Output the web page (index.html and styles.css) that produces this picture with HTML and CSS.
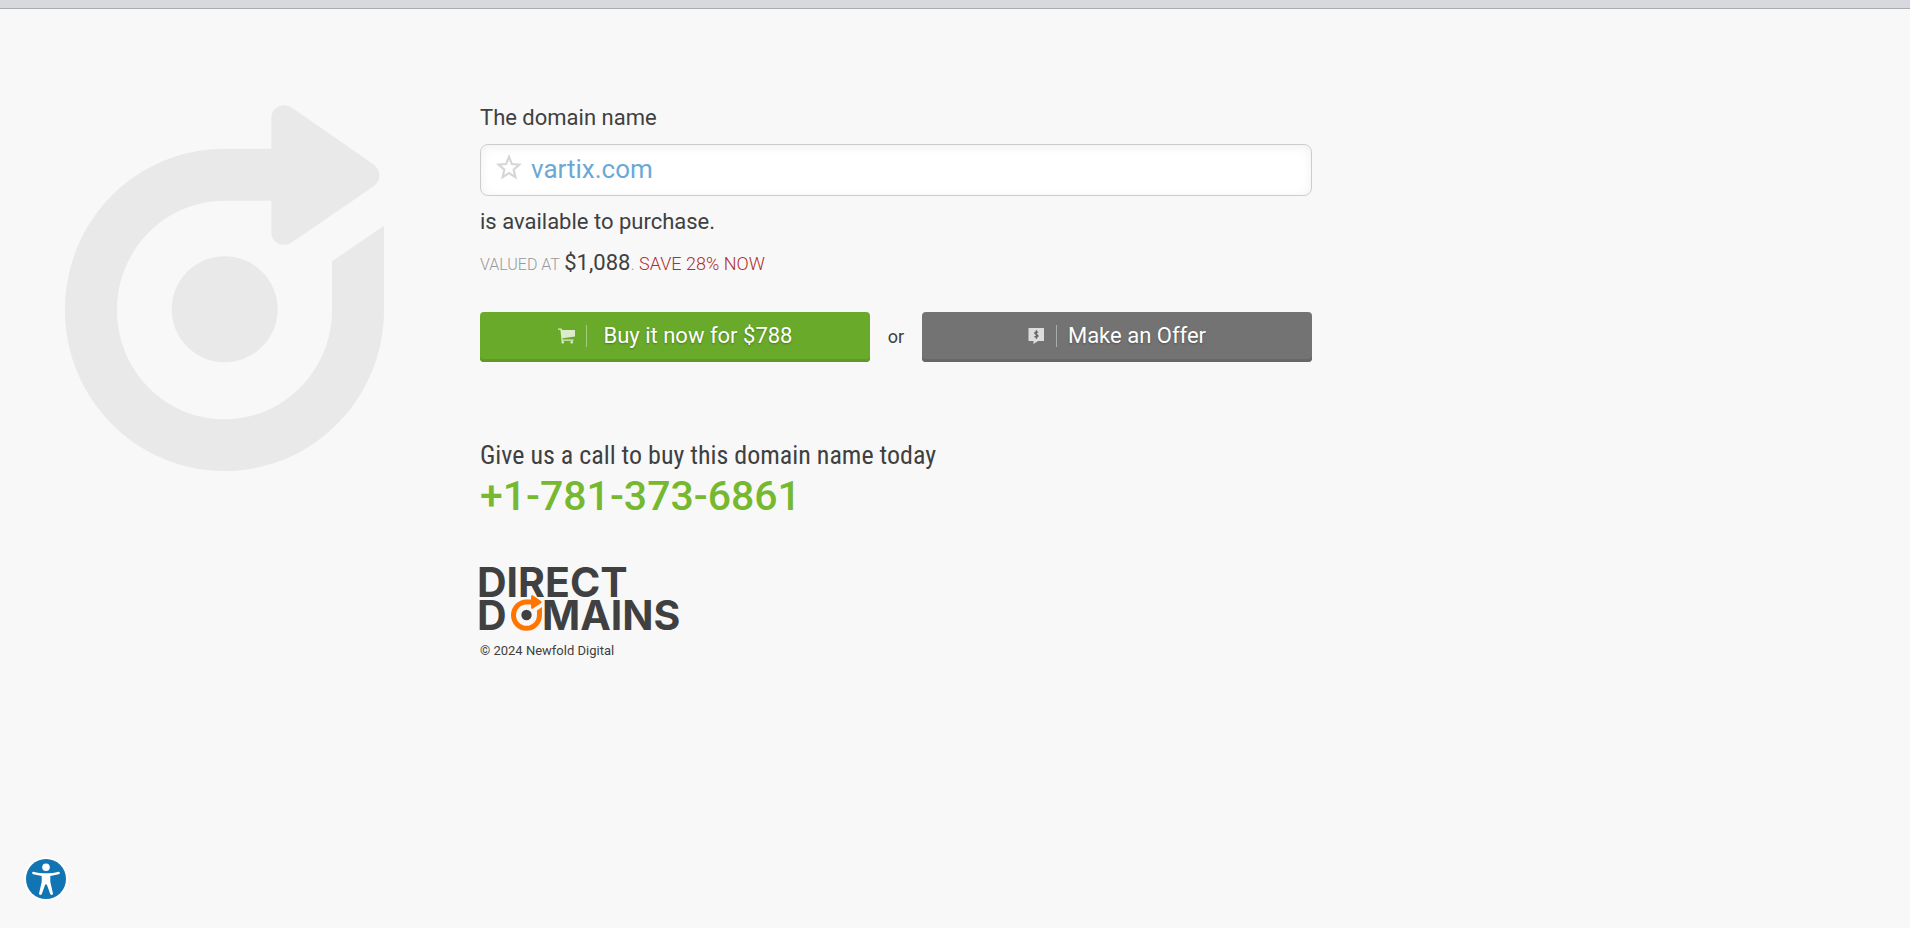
FILE: index.html
```html
<!DOCTYPE html>
<html lang="en">
<head>
<meta charset="utf-8">
<meta name="viewport" content="width=device-width, initial-scale=1">
<title>vartix.com is available to purchase</title>
<link rel="stylesheet" href="styles.css">
</head>
<body>
<svg class="defs" aria-hidden="true">
  <symbol id="ring" viewBox="75 44 957 1098">
    <path d="M694 175H554C289 175 75 390 75 659C75 926 289 1142 554 1142C818 1142 1032 926 1032 659V406L876 513V659C876 840 732 987 554 987C375 987 231 840 231 659C231 478 375 331 554 331H694V428C694 458 729 474 756 456L999 289C1025 272 1025 240 999 221L756 52C729 34 694 50 694 84Z"/>
  </symbol>
</svg>
<div class="topbar"></div>
<main class="page">
  <svg class="emblem" viewBox="75 44 957 1098" aria-hidden="true">
    <use href="#ring" x="75" y="44" width="957" height="1098"/>
    <circle cx="554" cy="657" r="159"/>
  </svg>
  <div class="content">
    <label class="lead" for="domain">The domain name</label>
    <div class="domain-box">
      <svg class="star" viewBox="0 0 24 24" aria-hidden="true"><path d="M12 2.600L14.600 9.200L21.600 9.800L16.300 14.400L17.900 21.300L12 17.600L6.100 21.300L7.700 14.400L2.400 9.800L9.400 9.200Z"/></svg>
      <input class="domain-input" id="domain" type="text" value="vartix.com" readonly>
    </div>
    <p class="lead">is available to purchase.</p>
    <p class="value"><span class="value-label">VALUED AT</span> <span class="price">$1,088</span>. <span class="save">SAVE 28% NOW</span></p>
    <div class="actions">
      <button class="btn btn-buy" type="button">
        <svg class="btn-icon" viewBox="0 0 17 16" aria-hidden="true"><path d="M0 .5H3.500L4.200 2H17V8.500L4.500 10.300V11.500H15.500V12.700H3.300V9.800L2.400 1.700H0Z"/><rect x="3.500" y="13" width="2.500" height="2.500" rx=".8"/><rect x="12.500" y="13" width="2.500" height="2.500" rx=".8"/></svg>
        <span class="btn-label">Buy it now for $788</span>
      </button>
      <span class="or">or</span>
      <button class="btn btn-offer" type="button">
        <svg class="btn-icon" viewBox="0 0 17 16" aria-hidden="true"><path d="M1 0H15.500Q16 0 16 .6V12.500Q16 13 15.500 13H10L5.500 16V13H1Q.5 13 .5 12.500V.6Q.5 0 1 0Z"/><path class="dollar" d="M10 4.700C9.700 3.500 6.900 3.400 6.800 5C6.800 6.800 10 6.100 10 8C9.900 9.600 7 9.500 6.600 8.300M8.400 2.200V10.800"/></svg>
        <span class="btn-label">Make an Offer</span>
      </button>
    </div>
    <section class="call">
      <p class="call-text">Give us a call to buy this domain name today</p>
      <a class="phone" href="tel:+17813736861">+1-781-373-6861</a>
    </section>
    <footer>
      <svg class="logo" viewBox="0 0 200 66" role="img" aria-label="Direct Domains">
        <text x="-3" y="31">DIRECT</text>
        <text x="-3" y="64">D</text>
        <use class="logo-ring" href="#ring" x="31" y="29" width="31" height="36"/>
        <circle cx="46.500" cy="49" r="5.200"/>
        <text x="62" y="64">MAINS</text>
      </svg>
      <p class="copyright">© 2024 Newfold Digital</p>
    </footer>
  </div>
</main>
<button class="access" type="button" aria-label="Accessibility">
  <svg viewBox="0 0 40 40" aria-hidden="true"><circle class="disc" cx="20" cy="20" r="20"/><circle cx="20" cy="8.300" r="3.800"/><path d="M7.500 12.700C15 14.800 25 14.800 32.500 12.700Q33.800 12.600 33.800 13.900Q33.800 15 32.700 15.300L24.300 16.900V23L27 34.500Q27 35.800 25.700 35.900Q24.500 36 24.100 34.800L20.800 25.500H19.200L15.900 34.800Q15.500 36 14.300 35.900Q13 35.800 13 34.500L15.700 23V16.900L7.300 15.300Q6.200 15 6.200 13.900Q6.200 12.600 7.500 12.700Z"/></svg>
</button>
</body>
</html>
```
FILE: styles.css
```css
* { box-sizing: border-box; }
body {
  margin: 0;
  min-height: 100vh;
  background: #f8f8f8;
  color: #404040;
  font-family: Roboto, "Liberation Sans", sans-serif;
}
p { margin: 0; }
.defs { position: absolute; width: 0; height: 0; }
.topbar {
  height: 9px;
  background: #d8d9df;
  border-bottom: 1px solid #a9abb0;
}
.page {
  display: grid;
  grid-template-columns: 319px minmax(0, 832px);
  column-gap: 96px;
  align-items: start;
  padding: 96px 65px 0;
}
.emblem { width: 100%; fill: #e9e9e9; }
.lead {
  display: block;
  font-size: 22px;
  line-height: 26px;
}
.domain-box {
  display: flex;
  align-items: center;
  gap: 9px;
  height: 52px;
  margin: 13px 0;
  padding: 0 15px 2px;
  background: #fff;
  border: 1px solid #ccc;
  border-radius: 8px;
  box-shadow: inset 0 2px 12px rgba(0, 0, 0, .06);
}
.star {
  width: 26px;
  height: 26px;
  margin-bottom: 4px;
  fill: none;
  stroke: #d6d6d6;
  stroke-width: 2;
}
.domain-input {
  flex: 1;
  min-width: 0;
  padding: 0;
  border: 0;
  outline: 0;
  background: none;
  color: #6aa9d6;
  font: 26px/32px Roboto, "Liberation Sans", sans-serif;
}
.value {
  margin-top: 14px;
  color: #999;
  font-size: 18px;
  font-weight: 300;
  line-height: 28px;
}
.value-label { font-size: 16px; }
.price { color: #404040; font-size: 22px; font-weight: 400; }
.save { color: #b02f2b; }
.actions {
  display: grid;
  grid-template-columns: 1fr 52px 1fr;
  align-items: center;
  margin-top: 33px;
}
.or { font-size: 18px; line-height: 20px; text-align: center; }
.btn {
  display: flex;
  align-items: center;
  justify-content: center;
  height: 50px;
  padding: 0 0 2px;
  border: 0;
  border-radius: 4px;
  color: #fff;
  font: 22px/26px Roboto, "Liberation Sans", sans-serif;
  text-shadow: 0 1px 2px rgba(0, 0, 0, .3);
}
.btn-buy { background: #6aaa2a; box-shadow: inset 0 -3px #5f9926; }
.btn-offer { background: #737373; box-shadow: inset 0 -3px #676767; }
.btn-icon { width: 17px; height: 16px; fill: rgba(255, 255, 255, .76); }
.dollar { fill: none; stroke: #666; stroke-width: 1.3; }
.btn-label {
  display: flex;
  align-items: center;
}
.btn-label::before {
  content: "";
  width: 1px;
  height: 22px;
  margin: 0 11px;
  background: rgba(255, 255, 255, .4);
}
.btn-buy .btn-label::before { margin-right: 17px; }
.call { margin-top: 77px; }
.call-text {
  font-family: "Liberation Sans Narrow", "Arial Narrow", "Roboto Condensed", "Liberation Sans", sans-serif;
  font-size: 26px;
  line-height: 32px;
}
.phone {
  display: block;
  color: #76b82f;
  font-size: 41px;
  font-weight: 500;
  line-height: 50px;
  text-decoration: none;
}
.logo {
  display: block;
  width: 200px;
  height: 66px;
  margin-top: 45px;
  overflow: visible;
  fill: #404040;
  font: 700 41px Inter, sans-serif;
}
.logo-ring { fill: #ff7500; }
.copyright {
  margin-top: 11px;
  font-size: 13px;
  line-height: 16px;
}
.access {
  position: fixed;
  left: 26px;
  bottom: 29px;
  width: 40px;
  height: 40px;
  padding: 0;
  border: 0;
  border-radius: 50%;
  background: none;
  box-shadow: 0 0 0 2px #fff;
}
.access svg { display: block; fill: #fff; }
.access .disc { fill: #1275b3; }
```
